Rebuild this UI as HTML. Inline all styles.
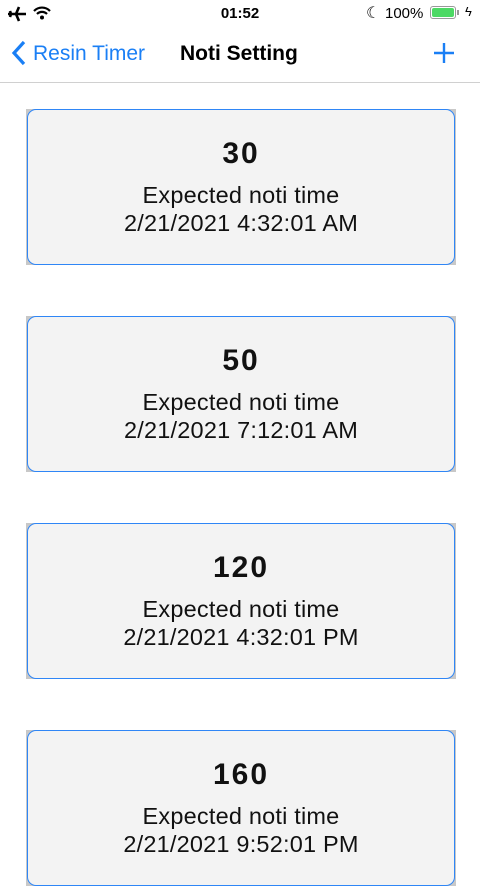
<!DOCTYPE html>
<html><head><meta charset="utf-8"><style>
body{margin:0;width:480px;height:854px;overflow:hidden;background:#fff;font-family:"Liberation Sans",sans-serif;position:relative}
.sb{position:absolute;top:0;left:0;width:480px;height:28px;font-size:15px}
.nav{position:absolute;top:28px;left:0;width:480px;height:54px;border-bottom:1px solid #d0d0d0}
.card{position:absolute;left:26px;width:430px;height:156px;background:#c8c8c8}
.card .in{position:absolute;left:1px;top:0;right:1px;bottom:0;background:#f3f3f3;border:1.5px solid #2f86f6;border-radius:9px;box-sizing:border-box;text-align:center;color:#111}
.n{position:absolute;top:27px;width:100%;font-size:30px;font-weight:bold;letter-spacing:2px}
.e{position:absolute;top:72px;width:100%;font-size:23.5px;letter-spacing:0.2px}
.d{position:absolute;top:100px;width:100%;font-size:23.5px;letter-spacing:0.2px}
</style></head><body>
<div class="sb">
<svg style="position:absolute;left:7px;top:6px" width="20" height="16" viewBox="0 0 20 16"><path d="M1 8h18M12 1l-3 7 3 7M3 5l1 3-1 3" stroke="#000" stroke-width="2.6" fill="none"/></svg>
<svg style="position:absolute;left:33px;top:6px" width="18" height="14" viewBox="0 0 18 14"><path d="M1 5a11 11 0 0 1 16 0M4 8a7 7 0 0 1 10 0" stroke="#000" stroke-width="2.2" fill="none"/><circle cx="9" cy="11.5" r="2" fill="#000"/></svg>
<div style="position:absolute;left:0;width:480px;top:5px;text-align:center;font-weight:bold">01:52</div>
<div style="position:absolute;left:366px;top:3px;font-size:16px">☾</div>
<div style="position:absolute;left:385px;top:5px">100%</div>
<div style="position:absolute;left:430px;top:6px;width:26px;height:13px;border:1px solid #999;border-radius:3px;box-sizing:border-box;padding:1px"><div style="background:#4cd964;width:100%;height:100%;border-radius:2px"></div></div>
<div style="position:absolute;left:457px;top:10px;width:2px;height:5px;background:#999"></div>
<div style="position:absolute;left:465px;top:4px;font-size:13px">ϟ</div>
</div>
<div class="nav">
<svg style="position:absolute;left:11px;top:12px" width="16" height="26" viewBox="0 0 16 26"><path d="M13 2L3 13l10 11" stroke="#1a7ff5" stroke-width="3.2" fill="none"/></svg>
<div style="position:absolute;left:33px;top:14px;font-size:21px;color:#1a7ff5">Resin Timer</div>
<div style="position:absolute;left:180px;top:14px;font-size:21px;font-weight:bold;color:#000">Noti Setting</div>
<svg style="position:absolute;left:433px;top:14px" width="22" height="22" viewBox="0 0 22 22"><path d="M11 1v20M1 11h20" stroke="#1a7ff5" stroke-width="2.4"/></svg>
</div>
<div class="card" style="top:109px"><div class="in"><div class="n">30</div><div class="e">Expected noti time</div><div class="d">2/21/2021 4:32:01 AM</div></div></div>
<div class="card" style="top:316px"><div class="in"><div class="n">50</div><div class="e">Expected noti time</div><div class="d">2/21/2021 7:12:01 AM</div></div></div>
<div class="card" style="top:523px"><div class="in"><div class="n">120</div><div class="e">Expected noti time</div><div class="d">2/21/2021 4:32:01 PM</div></div></div>
<div class="card" style="top:730px"><div class="in"><div class="n">160</div><div class="e">Expected noti time</div><div class="d">2/21/2021 9:52:01 PM</div></div></div>
</body></html>
